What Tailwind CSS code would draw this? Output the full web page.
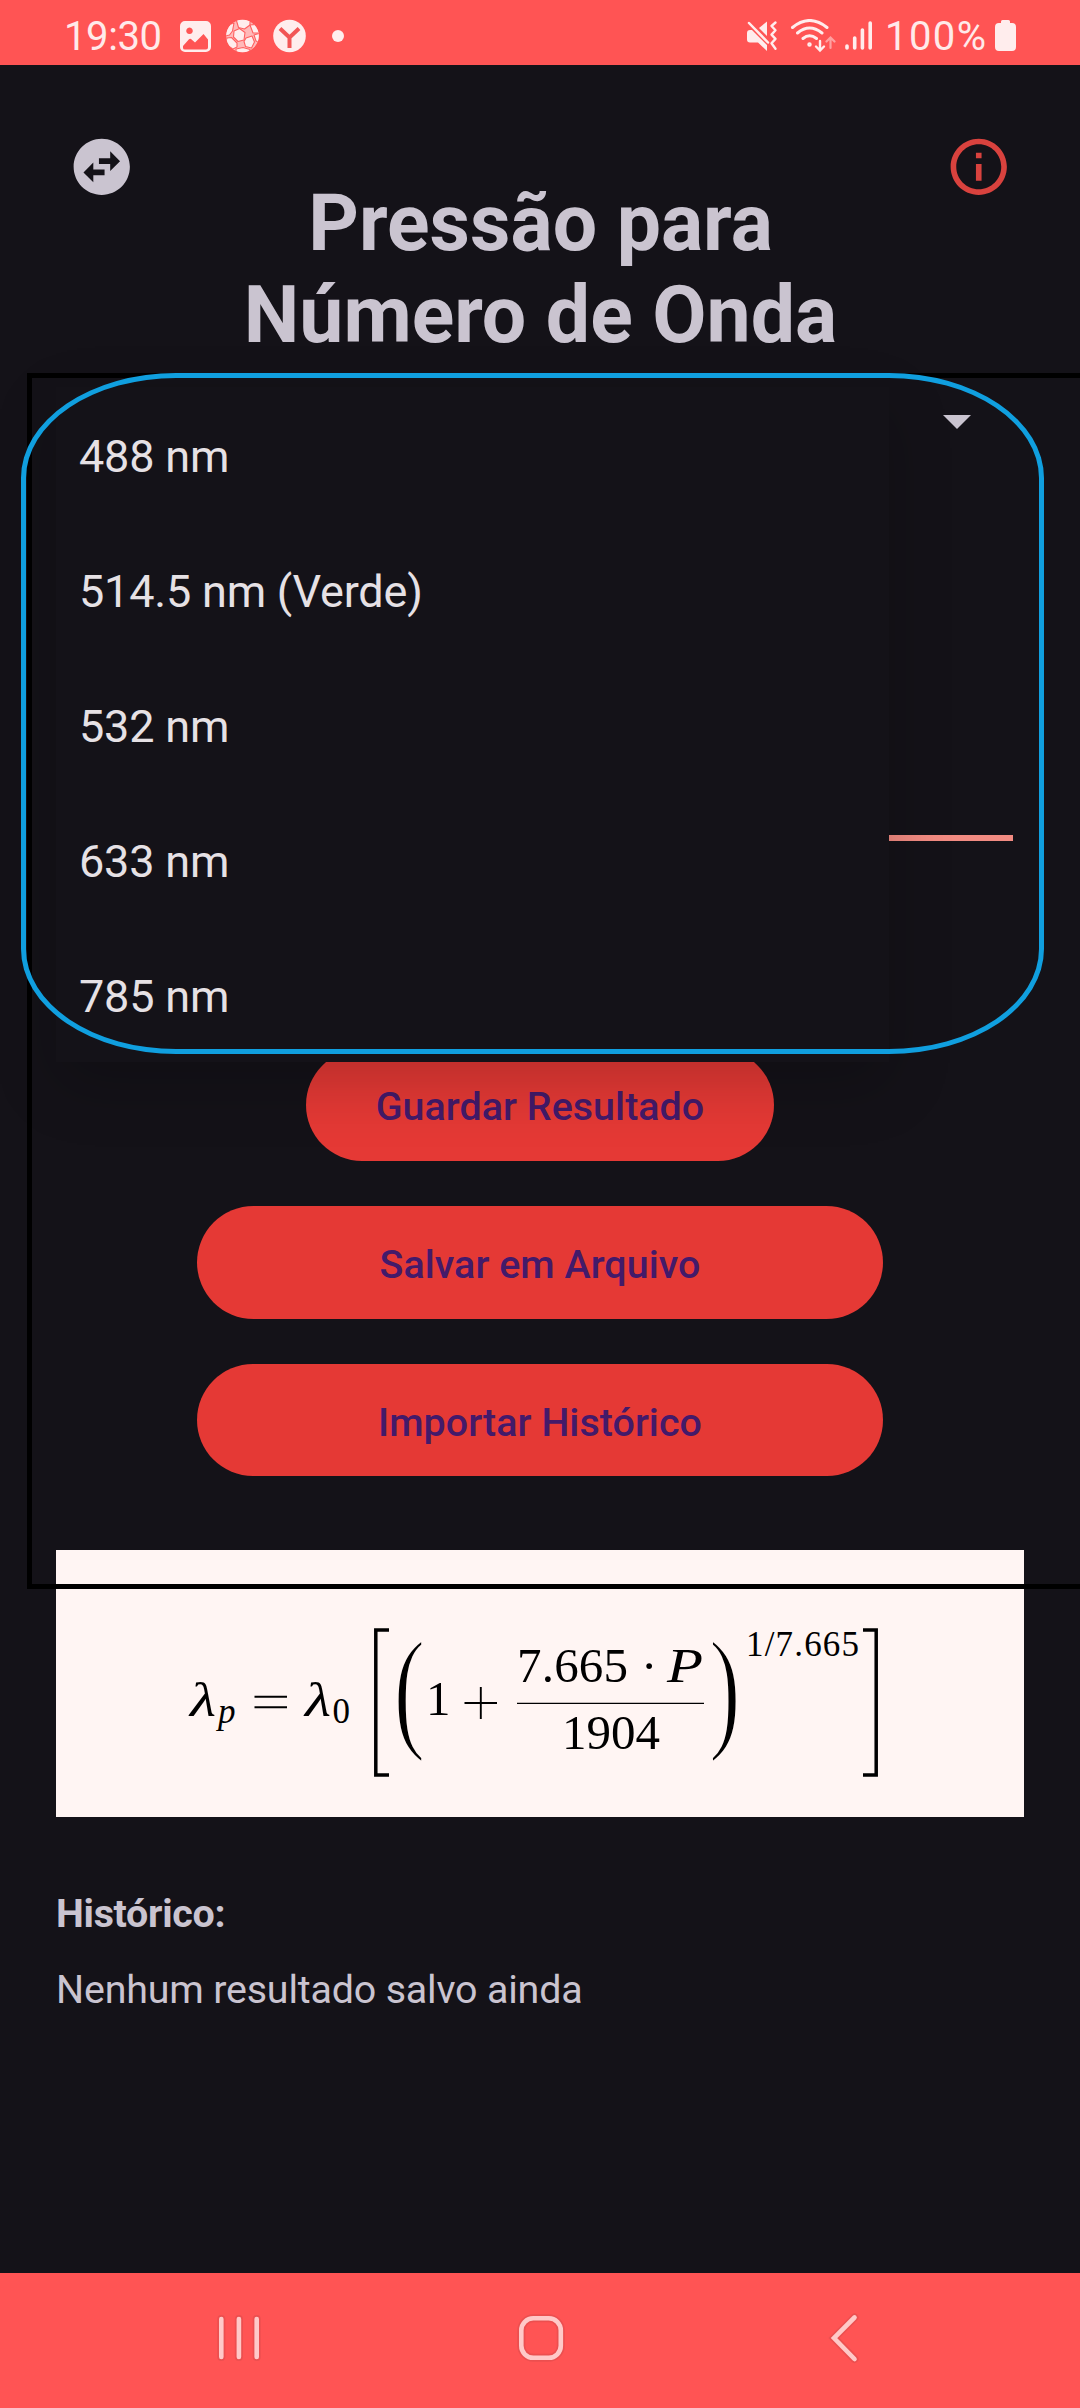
<!DOCTYPE html>
<html lang="pt">
<head>
<meta charset="utf-8">
<title>Pressão para Número de Onda</title>
<script src="https://cdn.jsdelivr.net/npm/@tailwindcss/browser@4"></script>
</head>
<body class="bg-[#141218]">
<div class="relative flex h-[2408px] w-[1080px] flex-col overflow-hidden bg-[#141218] font-['Roboto',sans-serif] text-[#cac4d0]">

  <!-- Status bar -->
  <header class="flex h-[65px] shrink-0 items-center justify-between bg-[#ff5454] pt-[7px] pr-[64px] pl-[64px] text-[40px] leading-[56px] text-[#ffeaea]">
    <div class="flex items-center">
      <span class="w-[116px] pt-[2px] tracking-[-0.4px]">19:30</span>
      <svg class="h-[32px] w-[31px]" viewBox="180 20 31 32" fill="#ffeded"><path fill-rule="evenodd" d="M185 21h21a5 5 0 0 1 5 5v21a5 5 0 0 1-5 5h-21a5 5 0 0 1-5-5V26a5 5 0 0 1 5-5zM189.500 27.500a3.300 3.300 0 1 0 .01 0zM183 46v2q0 1.500 2 1.500h21q2 0 2-2v-8l-4.500-5.500-8.500 8.500-4-3.500q-1-.8-2 .2z"/></svg>
      <svg class="ml-[15px] h-[34px] w-[33px]" viewBox="226 19 33 34"><defs><clipPath id="b"><circle cx="242.500" cy="36" r="16.300"/></clipPath></defs><g clip-path="url(#b)"><circle cx="242.500" cy="36" r="16.500" fill="#ffb9b9"/><g fill="#ffeded" stroke="#ff6060" stroke-width="1.100" stroke-linejoin="round"><path d="M234 31l5.500-2.500 5.500 4-1 7.500-6 1.500-4.500-4.500z"/><path d="M236 19l14 0 0 6-5.500 4-6-1.500z"/><path d="M250 25l9-1 1 9-7 0z"/><path d="M246 38l6-2 2.500 6-3 6-6-1.500-1.500-5z"/><path d="M225 26l9-3-1.500 8-3 4-5 1z"/><path d="M227 38l4.500-.5 5.500 5.500 0 4-4 2-8-5z"/><path d="M236 49l7-1.500 7 2-2 5-12 0z"/><path d="M254 35l6-2v10l-4-2z"/></g></g></svg>
      <svg class="ml-[14px] h-[34px] w-[33px]" viewBox="273 19 33 34"><circle cx="289.500" cy="36" r="16.300" fill="#ffeded"/><path d="M280 28.500l9.500 9 9.500-9M289.500 37v11" fill="none" stroke="#f25555" stroke-width="4"/></svg>
      <svg class="ml-[26px] h-[12px] w-[12px]" viewBox="0 0 12 12"><circle cx="6" cy="6" r="6" fill="#ffeded"/></svg>
    </div>
    <div class="flex items-center">
      <svg class="h-[34px] w-[31px]" viewBox="747 20 31 34"><path d="M747 34q0-3 3-3h2l15 15v6l-9-8.500h-8q-3 0-3-3zM759 29l8-6.500V37z" fill="#ffeded"/><path d="M749 24l19 19.500" stroke="#ffeded" stroke-width="2.500" stroke-linecap="round"/><path d="M775.500 23.500l-4 3.500 4 4.300-4 4.300 4 4.300-4 4.300 4 5.500" fill="none" stroke="#ffeded" stroke-width="2.400" stroke-linecap="round" stroke-linejoin="round"/></svg>
      <svg class="ml-[12px] h-[34px] w-[46px]" viewBox="790 20 46 34" fill="none" stroke="#ffeded" stroke-width="3" stroke-linecap="round"><path d="M792.500 28.500q17-14 34.500 0M797.500 34q12-10 24.500 0M803 39.500q6.500-5.500 13.500 0"/><circle cx="809.500" cy="45.500" r="1" stroke-width="2.500"/><path d="M820 42v9M816 47.500l4 4 4-4" stroke-width="2.400"/><path d="M830.500 49v-9M826.500 42.500l4-4 4 4" stroke="#ffa0a0" stroke-width="2.200"/></svg>
      <svg class="ml-[9px] h-[34px] w-[28px]" viewBox="845 20 28 34" stroke="#ffeded" stroke-width="3.600" stroke-linecap="round"><path d="M847 47v2M854.700 39v10M862.400 31v18M870.200 24v25"/></svg>
      <span class="ml-[12px] w-[110px] pt-[2px] tracking-[1.4px]">100%</span>
      <svg class="h-[34px] w-[21px]" viewBox="995 20 21 34"><path d="M1001 24v-1.500q0-1.500 1.500-1.500h6q1.500 0 1.500 1.500V24h2q4 0 4 4v20q0 4-4 4h-13q-4 0-4-4V28q0-4 4-4z" fill="#ffeded"/></svg>
    </div>
  </header>

  <!-- Screen content -->
  <main class="flex flex-1 flex-col">
    <div class="flex items-start justify-between pt-[68px] pr-[67px] pl-[68px]">
      <svg class="h-[67.5px] w-[67.5px]" viewBox="0 0 24 24" fill="#cac4d0"><path d="M22 12c0-5.520-4.480-10-10-10S2 6.480 2 12s4.480 10 10 10 10-4.480 10-10zm-7-5.500l3.500 3.500-3.500 3.500V11h-4V9h4V6.500zm-6 11L5.500 14 9 10.500V13h4v2H9v2.500z"/></svg>
      <h1 class="mt-[44px] text-center text-[78.75px] leading-[92px] font-bold">Pressão para<br>Número de Onda</h1>
      <svg class="h-[67.5px] w-[67.5px]" viewBox="0 0 24 24" fill="#d9423e"><path d="M11 7h2v2h-2zm0 4h2v6h-2zm1-9C6.480 2 2 6.480 2 12s4.480 10 10 10 10-4.480 10-10S17.520 2 12 2zm0 18c-4.410 0-8-3.590-8-8s3.590-8 8-8 8 3.590 8 8-3.590 8-8 8z"/></svg>
    </div>

    <!-- Laser selector and field underline, mostly behind the open list -->
    <div class="mx-[67px] flex h-[687.5px] flex-col items-end pt-[54px]">
      <svg class="mr-[42px] h-[14px] w-[28px]" viewBox="0 0 28 14"><path d="M0 0h28L14 14z" fill="#cac4d0"/></svg>
      <div class="mt-[406px] h-[6px] w-full bg-[#f28b82]"></div>
    </div>

    <div class="flex flex-col items-center gap-[45px] text-[39.4px] font-medium text-[#431a6a]">
      <div class="flex h-[112.5px] w-[468px] items-center justify-center rounded-full bg-[#e53935] pt-[4px] tracking-[0.05px]">Guardar Resultado</div>
      <div class="flex h-[112.5px] w-[686px] items-center justify-center rounded-full bg-[#e53935] pt-[4px] tracking-[0.05px]">Salvar em Arquivo</div>
      <div class="flex h-[112.5px] w-[686px] items-center justify-center rounded-full bg-[#e53935] pt-[5px] tracking-[0.05px]">Importar Histórico</div>
    </div>

    <!-- Formula -->
    <div class="mx-[56px] mt-[74px] h-[267px] bg-[#fff5f3]">
      <svg class="h-[267px] w-[968px] font-['Liberation_Serif',serif]" viewBox="56 1550 968 267" fill="#000">
        <g font-size="49">
          <text x="190" y="1716" font-style="italic" textLength="26" lengthAdjust="spacingAndGlyphs">λ</text>
          <text x="305" y="1716" font-style="italic" textLength="26" lengthAdjust="spacingAndGlyphs">λ</text>
          <text x="426" y="1715">1</text>
          <text x="517" y="1682" textLength="111">7.665</text>
          <text x="641" y="1682">·</text>
          <text x="667" y="1682" font-style="italic" textLength="36" lengthAdjust="spacingAndGlyphs">P</text>
          <text x="562" y="1749">1904</text>
        </g>
        <g font-size="35">
          <text x="218" y="1723" font-style="italic">p</text>
          <text x="332.500" y="1723">0</text>
          <text x="746" y="1656" textLength="113">1/7.665</text>
        </g>
        <g font-size="136" stroke="#fff5f3" stroke-width="2.600">
          <text transform="translate(393.500 1734) scale(.7 1)">(</text>
          <text transform="translate(709 1734) scale(.7 1)">)</text>
        </g>
        <g fill="none" stroke="#000">
          <path d="M254.500 1696.700h32.500M254.500 1707.200h32.500M464.500 1703h32.500M480.800 1687v32" stroke-width="1.900"/>
          <path d="M517 1703.300h187" stroke-width="1.300"/>
          <path d="M389 1630h-13.200v145H389M863 1630h13.200v145H863" stroke-width="3.500"/>
        </g>
      </svg>
    </div>

    <section class="mt-[74px] ml-[56px] text-[39.4px] leading-[46px]">
      <h2 class="font-bold tracking-[-0.3px]">Histórico:</h2>
      <p class="mt-[30px] tracking-[-0.18px]">Nenhum resultado salvo ainda</p>
    </section>
  </main>

  <!-- Navigation bar -->
  <nav class="flex h-[135px] shrink-0 items-center justify-between bg-[#ff5454] pr-[218px] pb-[5px] pl-[215px]">
    <svg class="h-[54px] w-[48px]" viewBox="215 2311 48 54" fill="none" stroke-linecap="round"><path d="M221.300 2319v38M238.900 2319v38M256.700 2319v38" stroke="#e04c4d" stroke-width="8" opacity=".6"/><path d="M221.300 2319v38M238.900 2319v38M256.700 2319v38" stroke="#ffc9c8" stroke-width="4.600"/></svg>
    <svg class="mr-[9px] h-[54px] w-[54px]" viewBox="514 2311 54 54" fill="none"><rect x="521.300" y="2318.300" width="39.500" height="39.500" rx="12" stroke="#e04c4d" stroke-width="8" opacity=".6"/><rect x="521.300" y="2318.300" width="39.500" height="39.500" rx="12" stroke="#ffc9c8" stroke-width="4.600"/></svg>
    <svg class="h-[54px] w-[34px]" viewBox="828 2311 34 54" fill="none" stroke-linecap="round"><path d="M854.500 2317.500L834 2338l20.500 21" stroke="#e04c4d" stroke-width="8" opacity=".6"/><path d="M854.500 2317.500L834 2338l20.500 21" stroke="#ffc9c8" stroke-width="4.600"/></svg>
  </nav>

  <!-- Open list of wavelengths -->
  <ul class="absolute top-[387px] left-[56px] flex w-[833px] flex-col bg-[#141218] pl-[23px] text-[45px] tracking-[-0.2px] text-[#e6e1e5] shadow-[0_22px_60px_rgba(0,0,0,0.2)]">
    <li class="flex h-[135px] items-center pt-[5px]">488 nm</li>
    <li class="flex h-[135px] items-center pt-[5px]">514.5 nm (Verde)</li>
    <li class="flex h-[135px] items-center pt-[5px]">532 nm</li>
    <li class="flex h-[135px] items-center pt-[5px]">633 nm</li>
    <li class="flex h-[135px] items-center pt-[5px]">785 nm</li>
  </ul>

  <!-- Annotation frames -->
  <div class="absolute top-[373px] left-[27px] h-[1216px] w-[1080px] border-[5px] border-black"></div>
  <div class="absolute top-[373px] left-[21px] h-[681px] w-[1023px] rounded-[155px/105px] border-[5px] border-[#109fdf]"></div>
</div>
</body>
</html>
